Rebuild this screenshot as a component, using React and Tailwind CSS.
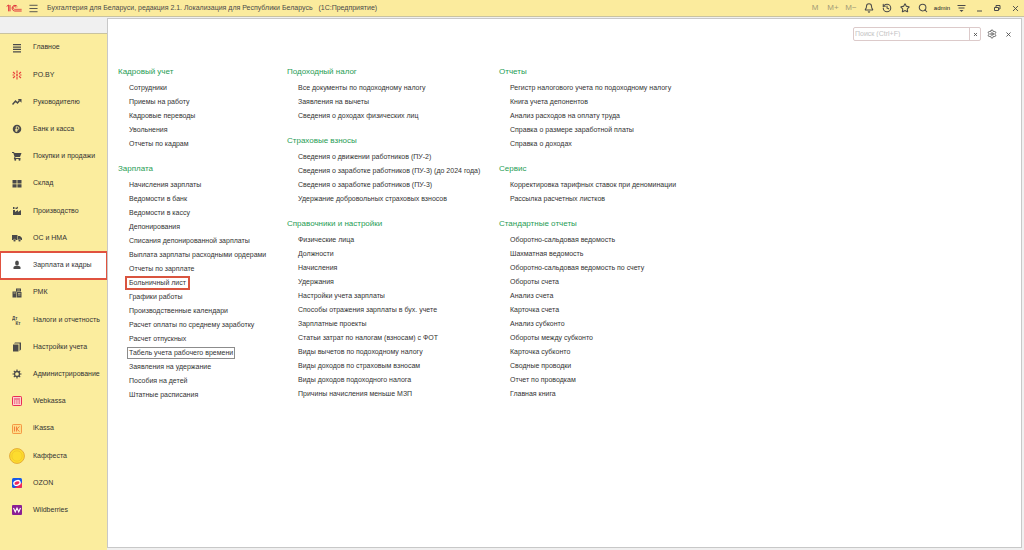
import React, { useState } from 'react';
import { Bell, History, Star, Search, Settings, X, Menu } from 'lucide-react';

const dark = '#4a4a4a';

const Glyph = ({ children, className = 'h-[10px] w-[10px]' }) => (
  <svg viewBox="0 0 20 20" fill={dark} className={className} aria-hidden="true">
    {children}
  </svg>
);

const icons = {
  list: (
    <Glyph>
      <path d="M2 2h16v2.6H2zM2 6.8h16v2.6H2zM2 11.6h16v2.6H2zM2 16.4h16V19H2z" />
    </Glyph>
  ),
  poby: (
    <Glyph>
      <g stroke="#e8413c" strokeWidth="2.2" fill="none">
        <path d="M10 1v6M10 13v6M2 4l4 3.5M18 4l-4 3.5M2 16l4-3.5M18 16l-4-3.5M1 10h4M15 10h4" />
      </g>
      <circle cx="10" cy="10" r="2" fill="#e8413c" />
    </Glyph>
  ),
  trend: (
    <Glyph>
      <path d="M1 15l6-7 4 4 4-5" fill="none" stroke={dark} strokeWidth="3" />
      <path d="M11.5 4H19v7.5z" />
    </Glyph>
  ),
  coin: (
    <Glyph>
      <circle cx="10" cy="10" r="8.5" />
      <path d="M8.5 16V5.5h2.5a2.8 2.8 0 010 5.6H6.5M6.5 13.5h5" fill="none" stroke="#fbed9e" strokeWidth="1.8" />
    </Glyph>
  ),
  cart: (
    <Glyph>
      <path d="M0 2h4l1 2h14l-3 8H7l-.6 2H17v2H3.6L5 11.6 2.6 4H0z" />
      <circle cx="6.5" cy="17.5" r="2" />
      <circle cx="15" cy="17.5" r="2" />
    </Glyph>
  ),
  boxes: (
    <Glyph>
      <path d="M1 2h8.2v7H1zM10.8 2H19v7h-8.2zM1 10.5h8.2V17H1zM10.8 10.5H19V17h-8.2z" />
    </Glyph>
  ),
  factory: (
    <Glyph>
      <path d="M2 18V8h4v4l6-4v4l6-4v10zM2 2h3v4H2zM7 3h3l2-2v3l-2 2H7z" />
    </Glyph>
  ),
  truck: (
    <Glyph>
      <path d="M0 4h11v10H0zM12 6h4l4 4v4h-8z" />
      <circle cx="5" cy="15" r="2.5" stroke="#fbed9e" />
      <circle cx="15" cy="15" r="2.5" stroke="#fbed9e" />
    </Glyph>
  ),
  person: (
    <Glyph>
      <ellipse cx="10" cy="6" rx="3.8" ry="5" />
      <path d="M3 18v-3c0-2 3-3.4 5-3.6h4c2 .2 5 1.6 5 3.6v3z" />
    </Glyph>
  ),
  register: (
    <Glyph>
      <path d="M1 7h8v12H1zM8 1h10v6H8zM10 8h9v11h-9z" />
      <path d="M3 10h4M10 4h6M12 11h5M12 14h5" stroke="#fbed9e" strokeWidth="1.2" />
    </Glyph>
  ),
  debit: (
    <svg viewBox="0 0 20 20" fill={dark} className="h-[10px] w-[10px]" aria-hidden="true">
      <text x="0" y="9" fontSize="9" fontWeight="bold" fontFamily="Liberation Sans, sans-serif">Дт</text>
      <text x="7" y="19" fontSize="9" fontWeight="bold" fontFamily="Liberation Sans, sans-serif">Кт</text>
    </svg>
  ),
  books: (
    <Glyph>
      <path d="M2 5h11v14H2z" />
      <path d="M4 3l2-2h12v14l-3 3V3z" />
    </Glyph>
  ),
  gear: (
    <Glyph>
      <circle cx="10" cy="10" r="5" fill="none" stroke={dark} strokeWidth="2.6" />
      <path
        d="M10 1v4M10 15v4M1 10h4M15 10h4M3.6 3.6l2.8 2.8M13.6 13.6l2.8 2.8M3.6 16.4l2.8-2.8M13.6 6.4l2.8-2.8"
        stroke={dark}
        strokeWidth="2.4"
      />
    </Glyph>
  ),
  webkassa: (
    <Glyph>
      <rect x="1" y="1" width="18" height="18" rx="1.5" fill="#fbd3cf" stroke="#ea2b55" strokeWidth="2" />
      <path d="M4 6h12M4 10h2.5M8.5 10H11M13 10h3M4 14h2.5M8.5 14H11M13 14h3" stroke="#ea2b55" strokeWidth="2.2" />
    </Glyph>
  ),
  ikassa: (
    <Glyph>
      <rect x="1" y="1" width="18" height="18" rx="1.5" fill="#fcdf8a" stroke="#f4903c" strokeWidth="1.8" />
      <path d="M5 5v10M9 5v10M15 5l-5.500 5L15 15" fill="none" stroke="#f4803c" strokeWidth="2" />
    </Glyph>
  ),
  kaffesta: (
    <Glyph className="h-4 w-4">
      <circle cx="10" cy="10" r="9.3" fill="#fddc2e" stroke="#e3a93a" strokeWidth="1.2" />
      <circle cx="10" cy="10" r="6.5" fill="none" stroke="#f0c02c" strokeWidth=".8" />
    </Glyph>
  ),
  ozon: (
    <Glyph>
      <rect width="20" height="20" rx="3" fill="#1659e8" />
      <path d="M20 9v8a3 3 0 01-3 3H5z" fill="#f0285a" />
      <ellipse cx="10" cy="10" rx="6.5" ry="4.5" transform="rotate(-20 10 10)" fill="#f0285a" stroke="#fff" strokeWidth="2.6" />
    </Glyph>
  ),
  wildberries: (
    <Glyph>
      <rect width="20" height="20" rx="2" fill="#8a1f94" />
      <path d="M3 6l3.5 8L10 6l3.5 8L17 6" fill="none" stroke="#fff" strokeWidth="2.2" />
    </Glyph>
  ),
};

const sections = [
  { name: 'Главное', icon: 'list' },
  { name: 'PO.BY', icon: 'poby' },
  { name: 'Руководителю', icon: 'trend' },
  { name: 'Банк и касса', icon: 'coin' },
  { name: 'Покупки и продажи', icon: 'cart' },
  { name: 'Склад', icon: 'boxes' },
  { name: 'Производство', icon: 'factory' },
  { name: 'ОС и НМА', icon: 'truck' },
  { name: 'Зарплата и кадры', icon: 'person' },
  { name: 'РМК', icon: 'register' },
  { name: 'Налоги и отчетность', icon: 'debit' },
  { name: 'Настройки учета', icon: 'books' },
  { name: 'Администрирование', icon: 'gear' },
  { name: 'Webkassa', icon: 'webkassa' },
  { name: 'iKassa', icon: 'ikassa' },
  { name: 'Каффеста', icon: 'kaffesta' },
  { name: 'OZON', icon: 'ozon' },
  { name: 'Wildberries', icon: 'wildberries' },
];

const columns = [
  [
    {
      title: 'Кадровый учет',
      items: ['Сотрудники', 'Приемы на работу', 'Кадровые переводы', 'Увольнения', 'Отчеты по кадрам'],
    },
    {
      title: 'Зарплата',
      items: [
        'Начисления зарплаты',
        'Ведомости в банк',
        'Ведомости в кассу',
        'Депонирования',
        'Списания депонированной зарплаты',
        'Выплата зарплаты расходными ордерами',
        'Отчеты по зарплате',
        'Больничный лист',
        'Графики работы',
        'Производственные календари',
        'Расчет оплаты по среднему заработку',
        'Расчет отпускных',
        'Табель учета рабочего времени',
        'Заявления на удержание',
        'Пособия на детей',
        'Штатные расписания',
      ],
    },
  ],
  [
    {
      title: 'Подоходный налог',
      items: ['Все документы по подоходному налогу', 'Заявления на вычеты', 'Сведения о доходах физических лиц'],
    },
    {
      title: 'Страховые взносы',
      items: [
        'Сведения о движении работников (ПУ-2)',
        'Сведения о заработке работников (ПУ-3) (до 2024 года)',
        'Сведения о заработке работников (ПУ-3)',
        'Удержание добровольных страховых взносов',
      ],
    },
    {
      title: 'Справочники и настройки',
      items: [
        'Физические лица',
        'Должности',
        'Начисления',
        'Удержания',
        'Настройки учета зарплаты',
        'Способы отражения зарплаты в бух. учете',
        'Зарплатные проекты',
        'Статьи затрат по налогам (взносам) с ФОТ',
        'Виды вычетов по подоходному налогу',
        'Виды доходов по страховым взносам',
        'Виды доходов подоходного налога',
        'Причины начисления меньше МЗП',
      ],
    },
  ],
  [
    {
      title: 'Отчеты',
      items: [
        'Регистр налогового учета по подоходному налогу',
        'Книга учета депонентов',
        'Анализ расходов на оплату труда',
        'Справка о размере заработной платы',
        'Справка о доходах',
      ],
    },
    {
      title: 'Сервис',
      items: ['Корректировка тарифных ставок при деноминации', 'Рассылка расчетных листков'],
    },
    {
      title: 'Стандартные отчеты',
      items: [
        'Оборотно-сальдовая ведомость',
        'Шахматная ведомость',
        'Оборотно-сальдовая ведомость по счету',
        'Обороты счета',
        'Анализ счета',
        'Карточка счета',
        'Анализ субконто',
        'Обороты между субконто',
        'Карточка субконто',
        'Сводные проводки',
        'Отчет по проводкам',
        'Главная книга',
      ],
    },
  ],
];

const marks = {
  'Больничный лист': '-mx-px px-px outline-2 outline-offset-1 outline-[#d9543f]',
  'Табель учета рабочего времени': 'outline-1 outline-offset-1 outline-[#8c8c8c]',
};

const Logo = () => (
  <svg viewBox="0 0 48 24" className="h-2 w-4" fill="none" stroke="#e0313a" aria-label="1С">
    <path d="M2 7l6-4v19M12 22V3" strokeWidth="3" />
    <path d="M34 8a8.500 8.500 0 10-8 13h21" strokeWidth="3" />
    <path d="M30 11a4.500 4.500 0 10-4 5h21" strokeWidth="2.4" />
  </svg>
);

const TopButton = ({ label, children }) => (
  <button type="button" aria-label={label} className="flex w-[18px] items-center justify-center">
    {children}
  </button>
);

const TopBar = () => (
  <header className="flex h-[17px] shrink-0 items-center border-b border-[#c9c3a0] bg-[#fbeb9d] pl-[6px] text-[#4a4a4a]">
    <Logo />
    <button type="button" aria-label="Меню" className="ml-[6px]">
      <Menu className="h-[11px] w-[11px]" strokeWidth={2} />
    </button>
    <h1 className="ml-2 flex-1 whitespace-pre text-[7px]">
      Бухгалтерия для Беларуси, редакция 2.1. Локализация для Республики Беларусь   (1С:Предприятие)
    </h1>
    <div className="flex items-center text-[8px] text-[#a39c78]">
      <TopButton label="M">M</TopButton>
      <TopButton label="M+">M+</TopButton>
      <TopButton label="M-">M−</TopButton>
    </div>
    <TopButton label="Уведомления"><Bell className="h-[10px] w-[10px]" strokeWidth={2.5} /></TopButton>
    <TopButton label="История"><History className="h-[10px] w-[10px]" strokeWidth={2.5} /></TopButton>
    <TopButton label="Избранное"><Star className="h-[10px] w-[10px]" strokeWidth={2.5} /></TopButton>
    <TopButton label="Поиск"><Search className="h-[10px] w-[10px]" strokeWidth={2.5} /></TopButton>
    <span className="w-5 text-center text-[6px] text-[#222]">admin</span>
    <TopButton label="Настройки окна">
      <svg viewBox="0 0 18 16" className="h-2 w-[9px]" fill={dark}>
        <path d="M1 2h16v2H1zM3 7h12v2H3zM5 12h8l-4 4z" />
      </svg>
    </TopButton>
    <TopButton label="Свернуть">
      <svg viewBox="0 0 10 10" className="h-[10px] w-[10px]" stroke={dark}><path d="M3 8h5" /></svg>
    </TopButton>
    <TopButton label="Развернуть">
      <svg viewBox="0 0 10 10" className="h-[10px] w-[10px]" fill="none" stroke={dark}>
        <path d="M2.5 4.5h4v3h-4zM4 4V2.500h4v3.500H7" />
      </svg>
    </TopButton>
    <TopButton label="Закрыть"><X className="h-[9px] w-[9px]" strokeWidth={2.5} /></TopButton>
  </header>
);

const Sidebar = ({ active, onSelect }) => (
  <aside className="flex w-[107px] shrink-0 flex-col">
    <div className="h-[17px] border-b border-[#c9c3a0] bg-[#f0f0f0]" />
    <nav className="flex flex-1 flex-col bg-[#fbed9e] pb-[26px]">
      {sections.map((section) => (
        <button
          key={section.name}
          type="button"
          onClick={() => onSelect(section.name)}
          className={`flex flex-1 items-center whitespace-nowrap pl-2 text-left text-[7px] text-[#333] ${
            section.name === active ? 'bg-white outline-2 -outline-offset-1 outline-[#e0523f]' : ''
          }`}
        >
          <span className="flex w-[18px] shrink-0 justify-center">{icons[section.icon]}</span>
          <span className="ml-[7px]">{section.name}</span>
        </button>
      ))}
    </nav>
  </aside>
);

const MenuGroup = ({ title, items }) => (
  <section>
    <h2 className="text-[8px] leading-[14px] text-[#1f9d55]">{title}</h2>
    <ul className="mt-[2px] pl-[11px]">
      {items.map((item) => (
        <li key={item} className="flex h-[14px] items-center">
          <a href="#" className={`whitespace-nowrap text-[7px] leading-[8px] text-[#333] ${marks[item] || ''}`}>
            {item}
          </a>
        </li>
      ))}
    </ul>
  </section>
);

const App = () => {
  const [active, setActive] = useState('Зарплата и кадры');
  const [query, setQuery] = useState('');

  return (
    <div className="flex min-h-screen flex-col bg-[#f0f0f0] font-['Liberation_Sans',Arial,sans-serif]">
      <TopBar />
      <div className="flex flex-1">
        <Sidebar active={active} onSelect={setActive} />
        <main className="mt-px mr-[2px] mb-[2px] flex-1 border border-[#c8c8c8] bg-white pl-[10px]">
          <div className="flex items-center justify-end pt-2 pr-[9px]">
            <div className="flex h-[14px] w-32 rounded-[2px] border border-[#dccaca]">
              <input
                type="text"
                aria-label="Поиск"
                placeholder="Поиск (Ctrl+F)"
                value={query}
                onChange={(e) => setQuery(e.target.value)}
                className="min-w-0 flex-1 pl-px text-[7px] outline-none placeholder:text-[#c4c4c4]"
              />
              <button
                type="button"
                aria-label="Очистить"
                onClick={() => setQuery('')}
                className="flex w-[11px] items-center justify-center border-l border-[#dccaca]"
              >
                <X className="h-[5px] w-[5px]" color={dark} strokeWidth={4} />
              </button>
            </div>
            <button type="button" aria-label="Настройка" className="ml-[6px]">
              <Settings className="h-[10px] w-[10px]" color={dark} />
            </button>
            <button type="button" aria-label="Закрыть панель" className="ml-2">
              <X className="h-[7px] w-[7px]" color={dark} strokeWidth={3} />
            </button>
          </div>
          <div className="mt-6 grid grid-cols-[169px_212px_1fr]">
            {columns.map((groups) => (
              <div key={groups[0].title} className="flex flex-col gap-[11px]">
                {groups.map((group) => (
                  <MenuGroup key={group.title} title={group.title} items={group.items} />
                ))}
              </div>
            ))}
          </div>
        </main>
      </div>
    </div>
  );
};

export default App;
